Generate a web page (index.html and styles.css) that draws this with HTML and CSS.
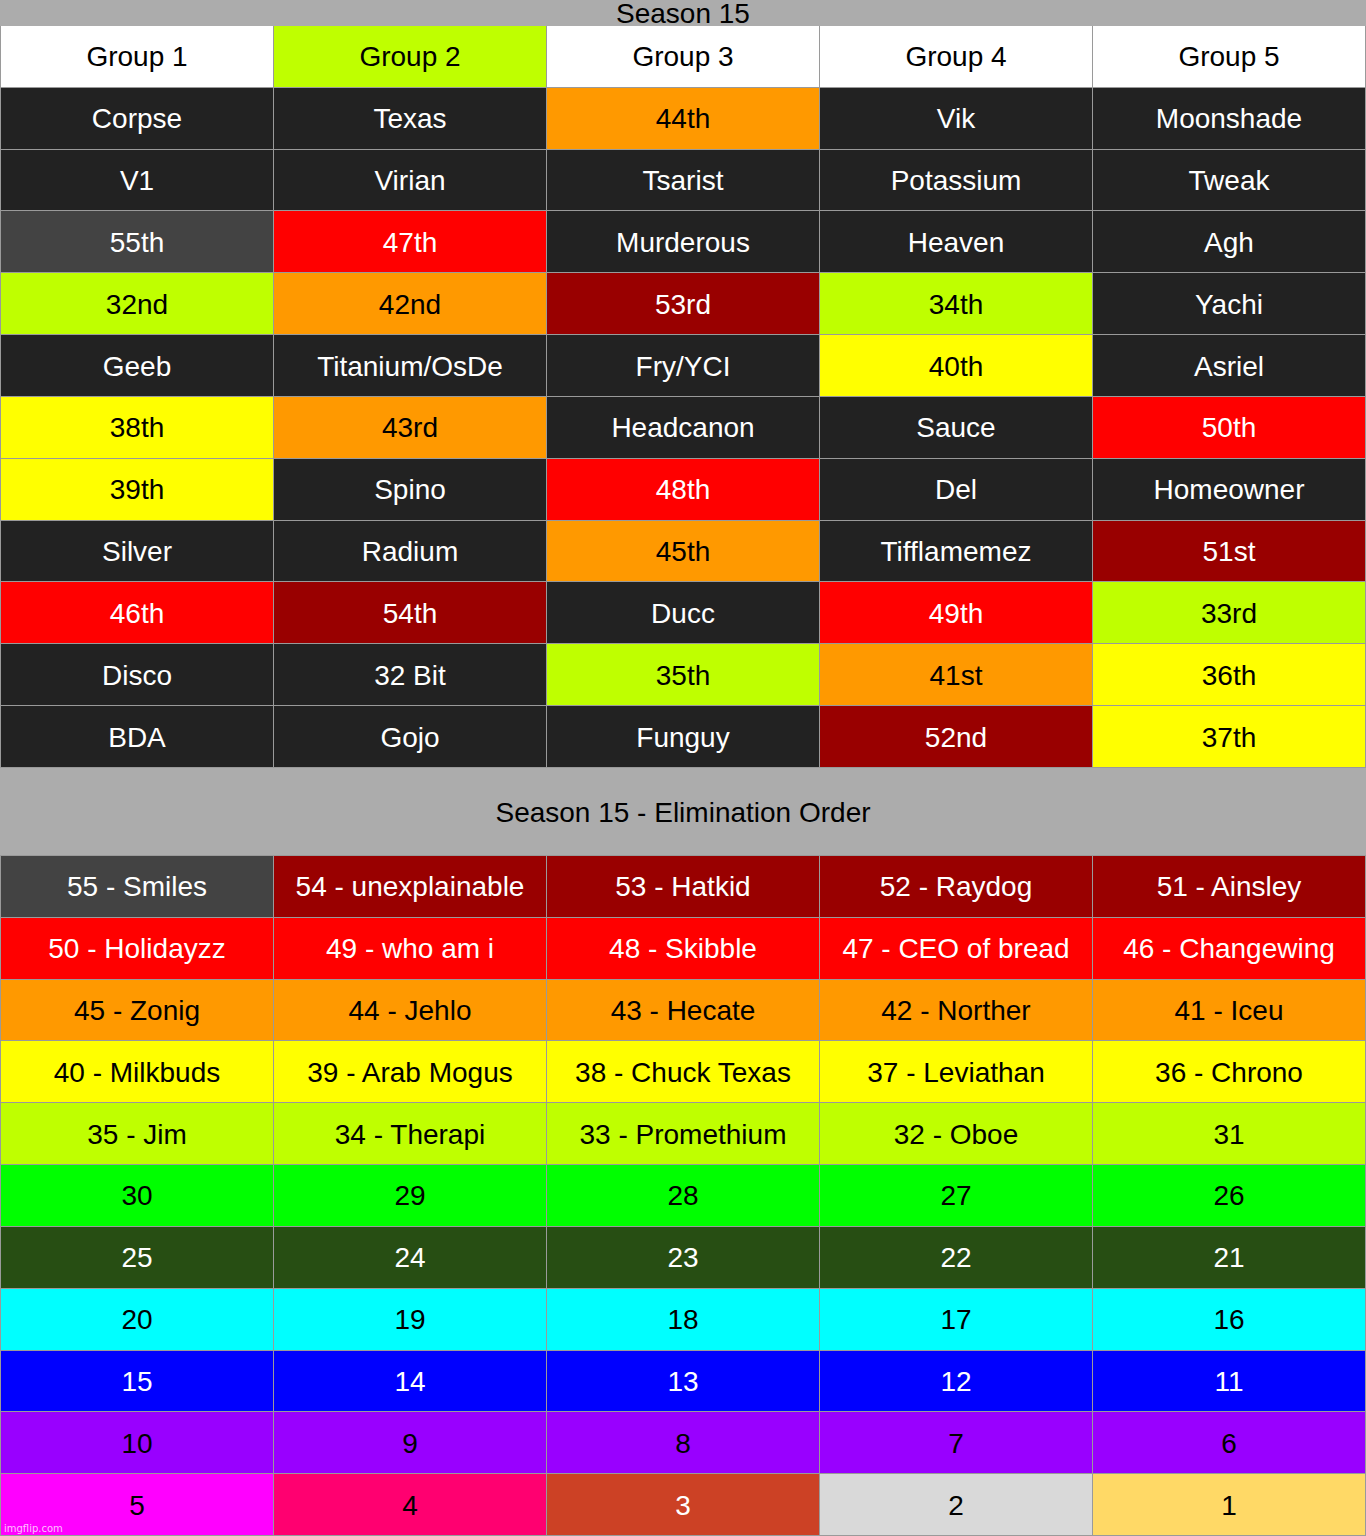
FILE: index.html
```html
<!DOCTYPE html>
<html>
<head>
<meta charset="utf-8">
<title>Season 15</title>
<link rel="stylesheet" href="styles.css">
</head>
<body>
<div class="page">
  <div class="title"><span class="title-text">Season 15</span></div>
  <div class="grid groups">
    <div class="c w">Group 1</div><div class="c lime">Group 2</div><div class="c w">Group 3</div><div class="c w">Group 4</div><div class="c w">Group 5</div>
    <div class="c d">Corpse</div><div class="c d">Texas</div><div class="c or">44th</div><div class="c d">Vik</div><div class="c d">Moonshade</div>
    <div class="c d">V1</div><div class="c d">Virian</div><div class="c d">Tsarist</div><div class="c d">Potassium</div><div class="c d">Tweak</div>
    <div class="c dg">55th</div><div class="c red">47th</div><div class="c d">Murderous</div><div class="c d">Heaven</div><div class="c d">Agh</div>
    <div class="c lime">32nd</div><div class="c or">42nd</div><div class="c dr">53rd</div><div class="c lime">34th</div><div class="c d">Yachi</div>
    <div class="c d">Geeb</div><div class="c d">Titanium/OsDe</div><div class="c d">Fry/YCI</div><div class="c yel">40th</div><div class="c d">Asriel</div>
    <div class="c yel">38th</div><div class="c or">43rd</div><div class="c d">Headcanon</div><div class="c d">Sauce</div><div class="c red">50th</div>
    <div class="c yel">39th</div><div class="c d">Spino</div><div class="c red">48th</div><div class="c d">Del</div><div class="c d">Homeowner</div>
    <div class="c d">Silver</div><div class="c d">Radium</div><div class="c or">45th</div><div class="c d">Tifflamemez</div><div class="c dr">51st</div>
    <div class="c red">46th</div><div class="c dr">54th</div><div class="c d">Ducc</div><div class="c red">49th</div><div class="c lime">33rd</div>
    <div class="c d">Disco</div><div class="c d">32 Bit</div><div class="c lime">35th</div><div class="c or">41st</div><div class="c yel">36th</div>
    <div class="c d">BDA</div><div class="c d">Gojo</div><div class="c d">Funguy</div><div class="c dr">52nd</div><div class="c yel">37th</div>
  </div>
  <div class="band">Season 15 - Elimination Order</div>
  <div class="grid elim">
    <div class="c dg">55 - Smiles</div><div class="c dr">54 - unexplainable</div><div class="c dr">53 - Hatkid</div><div class="c dr">52 - Raydog</div><div class="c dr">51 - Ainsley</div>
    <div class="c red">50 - Holidayzz</div><div class="c red">49 - who am i</div><div class="c red">48 - Skibble</div><div class="c red">47 - CEO of bread</div><div class="c red">46 - Changewing</div>
    <div class="c or">45 - Zonig</div><div class="c or">44 - Jehlo</div><div class="c or">43 - Hecate</div><div class="c or">42 - Norther</div><div class="c or">41 - Iceu</div>
    <div class="c yel">40 - Milkbuds</div><div class="c yel">39 - Arab Mogus</div><div class="c yel">38 - Chuck Texas</div><div class="c yel">37 - Leviathan</div><div class="c yel">36 - Chrono</div>
    <div class="c lime">35 - Jim</div><div class="c lime">34 - Therapi</div><div class="c lime">33 - Promethium</div><div class="c lime">32 - Oboe</div><div class="c lime">31</div>
    <div class="c grn">30</div><div class="c grn">29</div><div class="c grn">28</div><div class="c grn">27</div><div class="c grn">26</div>
    <div class="c dgr">25</div><div class="c dgr">24</div><div class="c dgr">23</div><div class="c dgr">22</div><div class="c dgr">21</div>
    <div class="c cy">20</div><div class="c cy">19</div><div class="c cy">18</div><div class="c cy">17</div><div class="c cy">16</div>
    <div class="c bl">15</div><div class="c bl">14</div><div class="c bl">13</div><div class="c bl">12</div><div class="c bl">11</div>
    <div class="c pu">10</div><div class="c pu">9</div><div class="c pu">8</div><div class="c pu">7</div><div class="c pu">6</div>
    <div class="c mg">5</div><div class="c pk">4</div><div class="c rust">3</div><div class="c lg">2</div><div class="c gold">1</div>
  </div>
  <div class="watermark">imgflip.com</div>
</div>
</body>
</html>
```
FILE: styles.css
```css
* { box-sizing: border-box; }
html, body { margin: 0; padding: 0; }
body {
  background: #acacac;
  font-family: "Liberation Sans", Arial, sans-serif;
  font-size: 28px;
  color: #000;
}
.page {
  position: relative;
  width: 1366px;
  height: 1536px;
  overflow: hidden;
}
.title {
  height: 26px;
  background: #acacac;
  display: flex;
  justify-content: center;
  align-items: flex-end;
}
.title-text {
  line-height: 24px;
  height: 24px;
  display: block;
}
.grid {
  display: grid;
  grid-template-columns: repeat(5, 1fr);
  gap: 1px;
  background: #9a9a9a;
}
.groups {
  height: 742px;
  padding: 0 1px 1px 1px;
  grid-template-rows: repeat(12, 1fr);
}
.band {
  height: 87px;
  background: #acacac;
  display: flex;
  align-items: center;
  justify-content: center;
  padding-top: 2px;
}
.elim {
  height: 681px;
  padding: 1px;
  grid-template-rows: repeat(11, 1fr);
}
.c {
  display: flex;
  align-items: center;
  justify-content: center;
  white-space: nowrap;
  line-height: 1;
  padding-top: 2px;
}
.w { background: #ffffff; color: #000; }
.d { background: #222222; color: #fff; }
.dg { background: #434343; color: #fff; }
.lime { background: #bfff00; color: #000; }
.or { background: #ff9900; color: #000; }
.red { background: #ff0000; color: #fff; }
.dr { background: #990000; color: #fff; }
.yel { background: #ffff00; color: #000; }
.grn { background: #00ff00; color: #000; }
.dgr { background: #274e13; color: #fff; }
.cy { background: #00ffff; color: #000; }
.bl { background: #0000ff; color: #fff; }
.pu { background: #9900ff; color: #000; }
.mg { background: #ff00ff; color: #000; }
.pk { background: #ff0070; color: #000; }
.rust { background: #cc4125; color: #fff; }
.lg { background: #d9d9d9; color: #000; }
.gold { background: #ffd966; color: #000; }
.watermark {
  position: absolute;
  left: 4px;
  bottom: 2px;
  font-family: "DejaVu Sans", "Liberation Sans", sans-serif;
  font-size: 10px;
  color: rgba(255, 255, 255, 0.75);
}
```
